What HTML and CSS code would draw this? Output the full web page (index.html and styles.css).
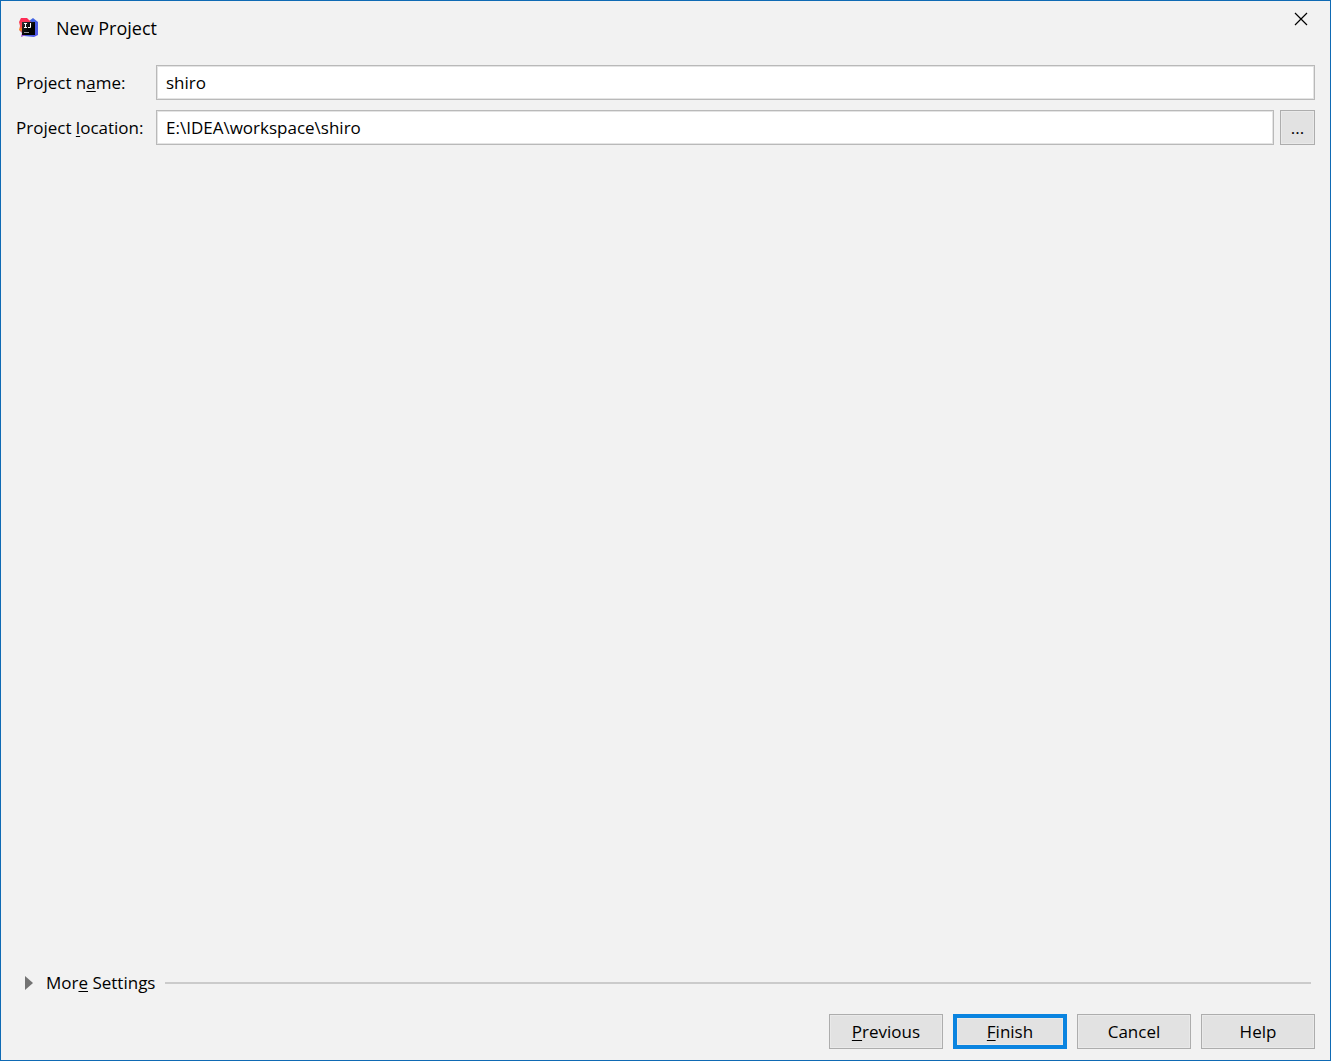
FILE: index.html
```html
<!DOCTYPE html>
<html lang="en">
<head>
  <meta charset="UTF-8">
  <title>New Project</title>
  <link rel="stylesheet" href="styles.css">
</head>
<body>
  <form class="dialog">
    <header class="title-bar">
      <svg class="logo" viewBox="0 0 20 20" aria-hidden="true">
        <defs>
          <linearGradient id="left" x1="0" y1="0" x2="0" y2="1">
            <stop offset="0" stop-color="#fe2857"/>
            <stop offset="0.45" stop-color="#fc4a50"/>
            <stop offset="0.6" stop-color="#fc8a18"/>
            <stop offset="0.8" stop-color="#b24bb8"/>
            <stop offset="1" stop-color="#8c45d8"/>
          </linearGradient>
          <linearGradient id="right" x1="0" y1="0" x2="1" y2="1">
            <stop offset="0" stop-color="#376be0"/>
            <stop offset="1" stop-color="#5857e6"/>
          </linearGradient>
          <linearGradient id="tile" x1="0" y1="0" x2="1" y2="1">
            <stop offset="0" stop-color="#333"/>
            <stop offset="0.6" stop-color="#000"/>
          </linearGradient>
        </defs>
        <path fill="url(#right)" d="M10 3L14 0L19 4V17L15 19L5 18Z"/>
        <path fill="url(#left)" d="M2 0H8L12 4V16L7 17L2 19L3 15L0 12L1 8L0 4Z"/>
        <path fill="url(#tile)" d="M3 4H16V17H3Z"/>
        <path fill="none" stroke="#fff" stroke-width="1" d="M5 5.5H8M6.5 5.5V9.5M5 9.5H8M11.5 5V9.5H9"/>
        <path fill="#999" d="M5 14H10V15H5Z"/>
      </svg>
      <h1>New Project</h1>
      <button type="button" class="close-btn" aria-label="Close">
        <svg viewBox="0 0 12 12"><path d="M0 0L12 12M12 0L0 12"/></svg>
      </button>
    </header>

    <div class="fields">
      <label for="name">Project n<u>a</u>me:</label>
      <input type="text" id="name" value="shiro">

      <label for="location">Project <u>l</u>ocation:</label>
      <div class="location">
        <input type="text" id="location" value="E:\IDEA\workspace\shiro">
        <button type="button" class="browse-btn">...</button>
      </div>
    </div>

    <div class="more">
      <button type="button" class="more-btn">
        <svg viewBox="0 0 8 14"><path d="M0 0L8 7L0 14Z"/></svg>
        <span>Mor<u>e</u> Settings</span>
      </button>
      <hr>
    </div>

    <div class="buttons">
      <button type="button"><u>P</u>revious</button>
      <button type="submit" class="finish-btn"><u>F</u>inish</button>
      <button type="button">Cancel</button>
      <button type="button">Help</button>
    </div>
  </form>
</body>
</html>
```
FILE: styles.css
```css
* {
  margin: 0;
  padding: 0;
  box-sizing: border-box;
}

body {
  font-family: 'Open Sans', 'Noto Sans', sans-serif;
  font-size: 17px;
  line-height: 24px;
  color: #000;
  background-color: #f2f2f2;
}

input, button {
  font: inherit;
  color: inherit;
}

u {
  text-decoration-skip-ink: none;
  text-decoration-thickness: 1px;
  text-underline-offset: 2px;
}

.dialog {
  display: flex;
  flex-direction: column;
  min-height: 100vh;
  padding: 0 15px 11px;
  border: 1px solid #0f6ab4;
}

.title-bar {
  display: flex;
  align-items: center;
  height: 54px;
}

.logo {
  width: 20px;
  height: 20px;
  margin: 0 17px 0 3px;
}

h1 {
  flex: 1;
  font-size: 18px;
  font-weight: normal;
}

.close-btn {
  align-self: flex-start;
  width: 28px;
  height: 36px;
  border: none;
  background: none;
}

.close-btn svg {
  display: block;
  width: 12px;
  height: 12px;
  margin: auto;
  overflow: visible;
  fill: none;
  stroke: #000;
  stroke-width: 1.2;
}

.fields {
  display: grid;
  grid-template-columns: 132px 1fr;
  gap: 10px 8px;
  align-items: center;
  margin-top: 10px;
}

.fields label {
  white-space: nowrap;
}

.fields input {
  width: 100%;
  height: 35px;
  padding: 0 9px;
  border: 1px solid #b9b9b9;
  box-shadow: inset 0 0 0 1px #e4e4e4;
  background-color: #fff;
  outline: none;
}

.location {
  display: flex;
  gap: 6px;
}

.location input {
  flex: 1;
}

.browse-btn, .buttons button {
  height: 35px;
  border: 1px solid #adadad;
  box-shadow: inset 0 0 0 1px #e9e9e9;
  background-color: #e2e2e2;
}

.browse-btn {
  width: 35px;
}

.more {
  display: flex;
  align-items: center;
  gap: 10px;
  margin-top: auto;
  padding: 0 4px 0 9px;
}

.more-btn {
  display: flex;
  align-items: center;
  gap: 13px;
  border: none;
  background: none;
}

.more-btn svg {
  width: 8px;
  height: 14px;
  fill: #737373;
}

hr {
  flex: 1;
  height: 2px;
  border: none;
  background-color: #cbcbcb;
}

.buttons {
  display: flex;
  justify-content: flex-end;
  gap: 10px;
  margin-top: 19px;
}

.buttons button {
  width: 114px;
}

.buttons .finish-btn {
  border: 4px solid #0a84e0;
}
```
